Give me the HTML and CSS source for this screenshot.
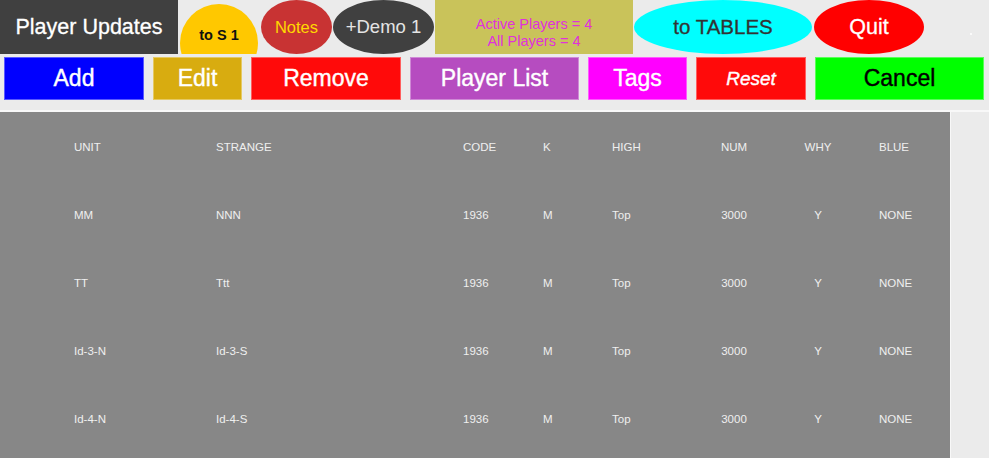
FILE: index.html
```html
<!DOCTYPE html>
<html lang="en">
<head>
    <meta charset="UTF-8">
    <meta name="viewport" content="width=device-width, initial-scale=1.0">
    <title>Player Updates</title>
    <link rel="stylesheet" href="styles.css">
</head>
<body>
    <div class="top-bar">
        <div class="title">Player Updates</div>
        <div class="oval to-s1"><span>to S 1</span></div>
        <div class="oval notes">Notes</div>
        <div class="oval demo">+Demo 1</div>
        <div class="counts">
            <div>Active Players = 4</div>
            <div>All Players = 4</div>
        </div>
        <div class="oval to-tables">to TABLES</div>
        <div class="oval quit">Quit</div>
        <span class="dot"></span>
    </div>

    <div class="actions">
        <button class="btn add">Add</button>
        <button class="btn edit">Edit</button>
        <button class="btn remove">Remove</button>
        <button class="btn player-list">Player List</button>
        <button class="btn tags">Tags</button>
        <button class="btn reset">Reset</button>
        <button class="btn cancel">Cancel</button>
    </div>

    <div class="content">
        <div class="players">
            <div class="row">
                <span>UNIT</span><span>STRANGE</span><span>CODE</span><span>K</span>
                <span>HIGH</span><span class="mid">NUM</span><span class="mid">WHY</span><span>BLUE</span>
            </div>
            <div class="row">
                <span>MM</span><span>NNN</span><span>1936</span><span>M</span>
                <span>Top</span><span class="mid">3000</span><span class="mid">Y</span><span>NONE</span>
            </div>
            <div class="row">
                <span>TT</span><span>Ttt</span><span>1936</span><span>M</span>
                <span>Top</span><span class="mid">3000</span><span class="mid">Y</span><span>NONE</span>
            </div>
            <div class="row">
                <span>Id-3-N</span><span>Id-3-S</span><span>1936</span><span>M</span>
                <span>Top</span><span class="mid">3000</span><span class="mid">Y</span><span>NONE</span>
            </div>
            <div class="row">
                <span>Id-4-N</span><span>Id-4-S</span><span>1936</span><span>M</span>
                <span>Top</span><span class="mid">3000</span><span class="mid">Y</span><span>NONE</span>
            </div>
        </div>
        <div class="side"></div>
    </div>
</body>
</html>
```

FILE: styles.css
```css
html, body {
    margin: 0;
    height: 100%;
}
body {
    font-family: "Liberation Sans", Arial, sans-serif;
    background: #ebebeb;
    overflow: hidden;
}

/* top row */
.top-bar {
    display: flex;
    align-items: flex-start;
    height: 54px;
    overflow: hidden;
}
.title {
    width: 178px;
    height: 54px;
    background: #404040;
    color: #fff;
    font-size: 21.5px;
    -webkit-text-stroke: 0.3px currentColor;
    display: flex;
    align-items: center;
    justify-content: center;
}
.oval {
    height: 54px;
    border-radius: 50%;
    display: flex;
    align-items: center;
    justify-content: center;
    flex-shrink: 0;
}
.to-s1 {
    width: 78px;
    height: 78px;
    margin: 4px 0 0 2px;
    background: #ffc800;
    color: #111;
    font-size: 14.5px;
    font-weight: bold;
    align-items: flex-start;
}
.to-s1 span {
    margin-top: 23px;
}
.notes {
    width: 71px;
    margin-left: 3px;
    background: #c83333;
    color: #ffd800;
    font-size: 16.5px;
}
.demo {
    width: 101px;
    margin-left: 1px;
    background: #404040;
    color: #e4e4e4;
    font-size: 18.5px;
}
.counts {
    width: 198px;
    height: 54px;
    margin-left: 1px;
    box-sizing: border-box;
    padding-top: 16px;
    background: #c9c35a;
    color: #e030dc;
    font-size: 14.5px;
    line-height: 17px;
    text-align: center;
}
.to-tables {
    width: 178px;
    margin-left: 1px;
    background: #00ffff;
    color: #333;
    font-size: 20.5px;
    -webkit-text-stroke: 0.3px currentColor;
}
.quit {
    width: 110px;
    margin-left: 2px;
    background: #ff0000;
    color: #fff;
    font-size: 21.5px;
    -webkit-text-stroke: 0.3px currentColor;
}
.dot {
    width: 2px;
    height: 2px;
    margin: 33px 0 0 46px;
    background: #fff;
    border-radius: 50%;
}

/* action buttons */
.actions {
    display: flex;
    gap: 9px;
    margin-top: 3px;
    padding-left: 4px;
    height: 43px;
}
.btn {
    height: 43px;
    border: 1px solid rgba(255, 255, 255, 0.35);
    padding: 0;
    font-family: inherit;
    font-size: 23px;
    color: #fff;
    -webkit-text-stroke: 0.4px currentColor;
}
.add { width: 140px; background: #0000ff; }
.edit { width: 89px; background: #d8ac10; }
.remove { width: 150px; background: #ff0a0a; }
.player-list { width: 169px; background: #b64cc0; }
.tags { width: 99px; background: #ff00ff; }
.reset { width: 110px; background: #ff0a0a; font-size: 19px; font-style: italic; }
.cancel { width: 169px; background: #00ff00; color: #000; }

/* player table */
.content {
    display: flex;
    margin-top: 10px;
    border-top: 2px solid #f8f8f8;
    height: 346px;
}
.players {
    width: 950px;
    background: #878787;
    border-right: 1px solid #f8f8f8;
    padding-top: 1px;
}
.side {
    flex: 1;
}
.row {
    display: grid;
    grid-template-columns: 142px 247px 80px 69px 99px 46px 122px 1fr;
    align-items: center;
    height: 68px;
    padding-left: 74px;
    font-size: 11.5px;
    color: #efefef;
}
.mid {
    text-align: center;
}
```
